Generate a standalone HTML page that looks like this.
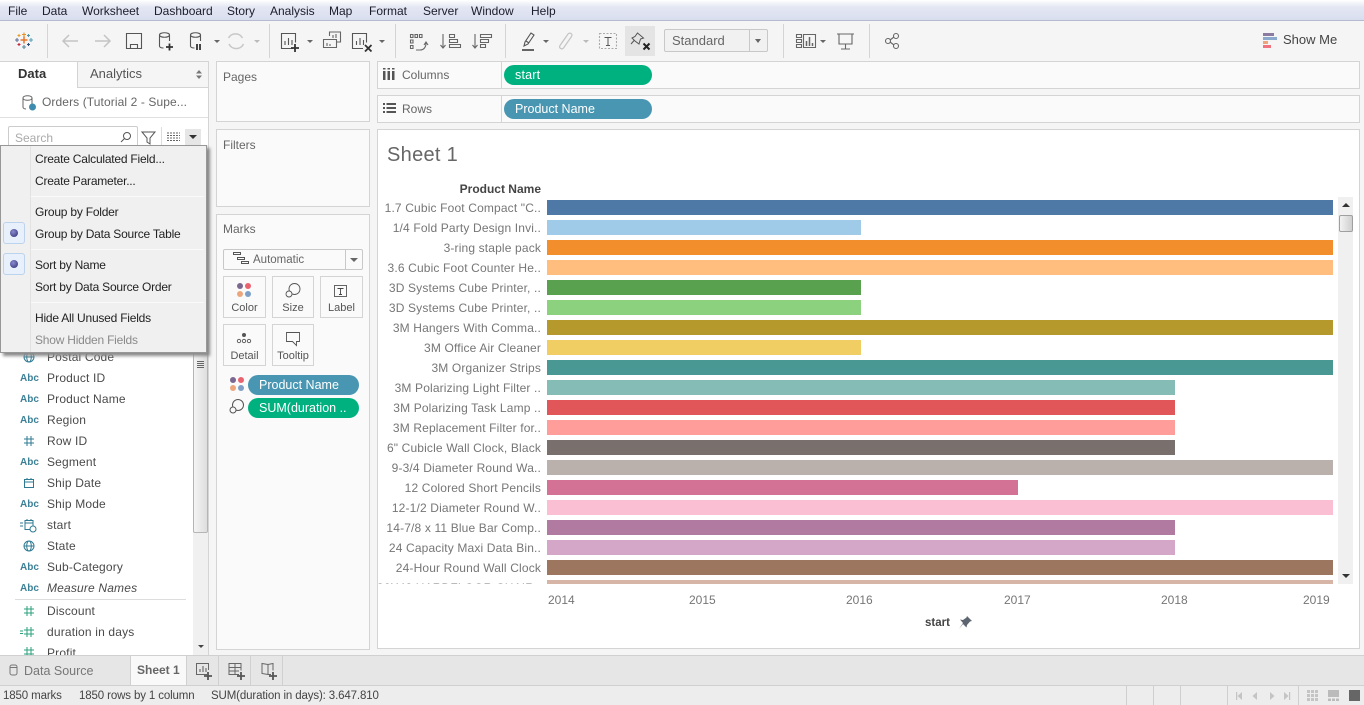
<!DOCTYPE html>
<html><head><meta charset="utf-8"><style>
html,body{margin:0;padding:0;width:1364px;height:705px;overflow:hidden;background:#f5f5f5;font-family:"Liberation Sans",sans-serif;font-size:12px;color:#333}
div,span,svg{position:absolute;box-sizing:border-box;white-space:nowrap}
svg{overflow:visible}
.m{top:3px;font-size:12px;color:#1c1c2c;line-height:16px}
.b{left:547px;height:15px}
.l{right:823px;width:165px;text-align:right;color:#767676;line-height:16px;overflow:hidden;letter-spacing:.15px}
.box{background:#fafafa;border:1px solid #d4d4d4}
.pill{border-radius:10px;color:#fff;height:20px;line-height:20px;font-size:12.5px;padding-left:11px}
.mi{left:35px;color:#222;line-height:16px;letter-spacing:-.22px}
.sp{left:31px;width:173px;height:1px;background:#d9d9d9;border-bottom:1px solid #fafafa}
.radio{left:3px;width:22px;height:22px;background:#e8f0fb;border:1px solid #bcd3ee;border-radius:3px}
.radio i{position:absolute;left:6px;top:6px;width:8px;height:8px;border-radius:50%;background:radial-gradient(circle at 40% 35%,#8a8ad0,#2b2b70)}
.f{left:47px;color:#4a4a4a;line-height:16px;letter-spacing:.17px}
.a{left:20px;width:19px;text-align:center;color:#3c8097;font-size:10px;line-height:14px;font-weight:bold}
.card{background:#fafafa;border:1px solid #d4d4d4;text-align:center;color:#555;font-size:11px}
.card span{left:0;right:0;bottom:2px;line-height:14px}
.ax{top:592px;color:#767676;line-height:16px}
.vs{top:24px;width:1px;height:34px;background:#d4d4d4}
.tri{width:0;height:0;border-left:3px solid transparent;border-right:3px solid transparent;border-top:3px solid #666}
.sb{top:686px;width:1px;height:19px;background:#cfcfcf}
.st{top:689px;color:#444;font-size:11.5px;line-height:15px;letter-spacing:-.13px}
</style></head><body>
<div style="left:0;top:0;width:1364px;height:21px;background:linear-gradient(#fff 0,#e4e7f3 35%,#d9deef 100%);border-bottom:1px solid #b5bad0"></div>
<span class="m" style="left:8px">File</span><span class="m" style="left:42px">Data</span><span class="m" style="left:82px">Worksheet</span><span class="m" style="left:154px">Dashboard</span><span class="m" style="left:227px">Story</span><span class="m" style="left:270px">Analysis</span><span class="m" style="left:329px">Map</span><span class="m" style="left:369px">Format</span><span class="m" style="left:423px">Server</span><span class="m" style="left:471px">Window</span><span class="m" style="left:531px">Help</span>

<!-- toolbar -->
<svg style="left:0;top:21px" width="1364" height="40" fill="none" stroke="#666" stroke-width="1.1">
<path d="M24 15.500v7M20.500 19h7" stroke="#e8762c" stroke-width="1.500"/>
<path d="M24 11.500v4M22 13.500h4" stroke="#e8922c"/>
<path d="M17 17v4M15 19h4" stroke="#5b6f9c"/>
<path d="M31 17v4M29 19h4" stroke="#5b9fb8"/>
<path d="M24 24v4M22 26h4" stroke="#59879b"/>
<path d="M19 13v3M17.500 14.500h3" stroke="#e8a02c"/>
<path d="M28.500 13v3M27 14.500h3" stroke="#4f96a8"/>
<path d="M19 22v3M17.500 23.500h3" stroke="#c5283d"/>
<path d="M28.500 22v3M27 23.500h3" stroke="#2f4f80"/>
<path d="M78 20H63M69 14l-6 6 6 6M95 20h15M104 14l6 6-6 6" stroke="#c4c4c4" stroke-width="1.500"/>
<path d="M126.500 12.500h15v15h-15zM130.500 27.500v-4h7v4" stroke="#555"/>
<path d="M159.500 14c0-3 10-3 10 0v6M159.500 14v11c0 1.500 2 2 4 2M159.500 14c0 3 10 3 10 0" stroke="#555"/><path d="M166 26h7M169.500 22.500v7" stroke="#333" stroke-width="1.800"/>
<path d="M190.500 14c0-3 10-3 10 0v6M190.500 14v11c0 1.500 2 2 4 2M190.500 14c0 3 10 3 10 0" stroke="#555"/><path d="M197 23v6M200 23v6" stroke="#333" stroke-width="1.800"/>
<path d="M228.500 17a8 8 0 0 1 14 0M243.500 23a8 8 0 0 1-14.500 0" stroke="#c8c8c8" stroke-width="1.500"/>
<path d="M293 27.500h-11.500v-15h14v9" stroke="#555"/><path d="M285 24v-4M288.500 24v-7M292 24v-5" stroke="#555"/><path d="M291 27h8M295 23v8" stroke="#333" stroke-width="1.800"/>
<path d="M329.500 15v-4h11v10h-3.500M323.500 18.500h13v8h-13z" stroke="#666"/><path d="M333 17v-3M336 17v-4M327 25v-3M330 25v-2" stroke="#666"/>
<path d="M363 27.500h-10.500v-15h14v9" stroke="#555"/><path d="M356.500 24v-4M360 24v-7M363.500 24v-5" stroke="#555"/><path d="M365 24l6.500 6.500M371.500 24l-6.500 6.500" stroke="#333" stroke-width="1.800"/>
<path d="M410.500 13.500h2.500v3h-2.500zM415 13.500h2.500v3H415zM419.500 13.500h2.500v3h-2.500zM410.500 19h2.500v3h-2.500zM410.500 24.500h2.500v3h-2.500zM416 29h4c4 0 6-3 6-7M424 24l2-3 2 3" stroke="#666"/>
<path d="M443 13v14M440.500 24l2.500 3 2.500-3M449.500 13.500h5v3h-5zM449.500 18.500h8v3h-8zM449.500 23.500h11v3h-11z" stroke="#666"/>
<path d="M475 13v14M472.500 24l2.500 3 2.500-3M480.500 13.500h11v3h-11zM480.500 18.500h8v3h-8zM480.500 23.500h5v3h-5z" stroke="#666"/>
<path d="M524 25l1-4 6-9 3 2-6 9zM526 20l3 2" stroke="#555"/>
<path d="M522 29h12" stroke="#555" stroke-width="1.800"/>
<path d="M561 23l7-10c2-2 5 0 3.500 2.500l-8 11.500c-1.500 2-5 0-3.500-2.500l7-10" stroke="#c4c4c4" stroke-width="1.200"/>
<rect x="599.500" y="12.500" width="17" height="15" stroke="#aaa" stroke-dasharray="2 1.500"/><path d="M604.500 16.500h7M608 16.500v8M606 24.500h4" stroke="#555" stroke-width="1"/>
</svg>
<div style="left:625px;top:26px;width:30px;height:30px;background:#e4e4e4"></div>
<svg style="left:625px;top:26px" width="30" height="30" fill="none"><path d="M12.500 7l6 5-3 1-1.500 5-4-3-3-3 3-1.500zM9.500 14l-3.500 4" stroke="#555" stroke-width="1"/><path d="M18.500 17.500l6 6M24.500 17.500l-6 6" stroke="#222" stroke-width="2"/></svg>
<div style="left:664px;top:29px;width:104px;height:23px;background:#f1f1f1;border:1px solid #c8c8c8;border-radius:2px;color:#666;font-size:13px;line-height:21px;padding-left:7px">Standard</div>
<div style="left:749px;top:30px;width:1px;height:21px;background:#c8c8c8"></div>
<div class="tri" style="left:755px;top:39px;border-left-width:3.500px;border-right-width:3.500px;border-top-width:4px"></div>
<div class="tri" style="left:214px;top:40px"></div><div class="tri" style="left:254px;top:40px;border-top-color:#bbb"></div><div class="tri" style="left:307px;top:40px"></div><div class="tri" style="left:379px;top:40px"></div><div class="tri" style="left:543px;top:40px"></div><div class="tri" style="left:583px;top:40px;border-top-color:#bbb"></div><div class="tri" style="left:820px;top:40px"></div>
<svg style="left:795px;top:30px" width="110" height="22" fill="none" stroke="#666" stroke-width="1.100">
<path d="M1.500 4.500h5v3h-5zM1.500 9.500h5v3h-5zM1.500 14.500h5v3h-5zM8.500 4.500h12v13h-12z"/><path d="M11.500 16v-5M14.500 16V7M17.500 16v-3" stroke-width="1.500"/>
<path d="M42 4h17M44 4v10h13V4M50.500 14v5M46 19h9" stroke-width="1.100"/>
<path d="M95 10l4-3M95 12l4 3" /><circle cx="93" cy="11" r="2.500"/><circle cx="101" cy="6" r="2.500"/><circle cx="101" cy="16" r="2.500"/></svg>
<div class="vs" style="left:47px"></div><div class="vs" style="left:269px"></div><div class="vs" style="left:395px"></div><div class="vs" style="left:505px"></div><div class="vs" style="left:783px"></div><div class="vs" style="left:869px"></div>
<div style="left:1263px;top:33px;width:11px;height:3px;background:#8c7ba0"></div><div style="left:1263px;top:37px;width:14px;height:3px;background:#8aa9cc"></div><div style="left:1263px;top:41px;width:5px;height:3px;background:#eda67c"></div><div style="left:1263px;top:45px;width:8px;height:3px;background:#f0737f"></div>
<span style="left:1283px;top:32px;font-size:13px;line-height:16px;color:#444">Show Me</span>

<!-- left panel -->
<div style="left:0;top:61px;width:209px;height:594px;background:#fff;border-right:1px solid #d4d4d4"></div>
<div style="left:77px;top:61px;width:131px;height:27px;background:#f5f5f5;border-left:1px solid #d4d4d4;border-bottom:1px solid #d4d4d4;border-top:1px solid #d4d4d4"></div>
<div style="left:0;top:61px;width:77px;height:1px;background:#d4d4d4"></div>
<span style="left:18px;top:66px;font-weight:bold;font-size:13px;line-height:16px;color:#333">Data</span>
<span style="left:90px;top:66px;font-size:13px;line-height:16px;color:#555">Analytics</span>
<svg style="left:196px;top:70px" width="6" height="9"><path d="M3 0l3 3.500H0zM3 9L0 5.500h6z" fill="#777"/></svg>
<svg style="left:22px;top:95px" width="16" height="16" fill="none" stroke="#666"><path d="M1 3c0-3 9-3 9 0v6M1 3v9c0 1 1 2 3 2M1 3c0 3 9 3 9 0"/><circle cx="10.500" cy="12" r="3.500" fill="#3e8bb0" stroke="none"/></svg>
<span style="left:42px;top:94px;color:#666;line-height:16px;letter-spacing:.1px">Orders (Tutorial 2 - Supe...</span>
<div style="left:0;top:117px;width:208px;height:1px;background:#e0e0e0"></div>
<div style="left:8px;top:126px;width:130px;height:25px;background:#fff;border:1px solid #ccc;border-radius:2px"></div>
<span style="left:15px;top:130px;color:#aaa;line-height:16px">Search</span>
<svg style="left:120px;top:131px" width="12" height="12" fill="none" stroke="#555"><circle cx="7" cy="5" r="3.500"/><path d="M4.500 7.500L1 11"/></svg>
<svg style="left:141px;top:131px" width="16" height="14" fill="none" stroke="#555"><path d="M1 1h13L9 7v6l-3-2V7z"/></svg>
<div style="left:161px;top:127px;width:1px;height:18px;background:#ddd"></div>
<svg style="left:167px;top:132px" width="14" height="10" stroke="#666"><path d="M0 1h13M0 3.500h13M0 6h13M0 8.500h13" stroke-dasharray="2 1"/></svg>
<div style="left:185px;top:129px;width:16px;height:16px;background:#e6e6e6"></div>
<div class="tri" style="left:189px;top:135px;border-left-width:4px;border-right-width:4px;border-top:4px solid #333"></div>

<!-- field list -->
<span class="a" style="top:393px">Abc</span><span class="f" style="top:391px">Product Name</span>
<span class="a" style="top:372px">Abc</span><span class="f" style="top:370px">Product ID</span>
<svg style="left:22px;top:351px" width="14" height="12" fill="none" stroke="#2f7a93"><circle cx="7" cy="6" r="5"/><ellipse cx="7" cy="6" rx="2.300" ry="5"/><path d="M2 6h10"/></svg><span class="f" style="top:349px">Postal Code</span>
<span class="a" style="top:414px">Abc</span><span class="f" style="top:412px">Region</span>
<svg style="left:23px;top:435px" width="12" height="12" stroke="#2f7a93" fill="none"><path d="M4 1v10M8 1v10M1 4h10M1 8h10"/></svg><span class="f" style="top:433px">Row ID</span>
<span class="a" style="top:456px">Abc</span><span class="f" style="top:454px">Segment</span>
<svg style="left:23px;top:477px" width="12" height="12" stroke="#2f7a93" fill="none"><path d="M1.500 2.500h9v8h-9zM1.500 5h9M4 1v2M8 1v2"/></svg><span class="f" style="top:475px">Ship Date</span>
<span class="a" style="top:498px">Abc</span><span class="f" style="top:496px">Ship Mode</span>
<svg style="left:20px;top:519px" width="18" height="14" stroke="#2f7a93" fill="none"><path d="M0 4h3M0 7h3M5 1.500h8v9H5zM5 4h8M7 0v2M11 0v2"/><circle cx="13" cy="10" r="3" fill="#fff"/></svg><span class="f" style="top:517px">start</span>
<svg style="left:22px;top:540px" width="14" height="12" fill="none" stroke="#2f7a93"><circle cx="7" cy="6" r="5"/><ellipse cx="7" cy="6" rx="2.300" ry="5"/><path d="M2 6h10"/></svg><span class="f" style="top:538px">State</span>
<span class="a" style="top:561px">Abc</span><span class="f" style="top:559px">Sub-Category</span>
<span class="a" style="top:582px">Abc</span><span class="f" style="top:580px;font-style:italic">Measure Names</span>
<div style="left:15px;top:599px;width:171px;height:1px;background:#ddd"></div>
<svg style="left:23px;top:605px" width="12" height="12" stroke="#2aa17c" fill="none"><path d="M4 1v10M8 1v10M1 4h10M1 8h10"/></svg><span class="f" style="top:603px">Discount</span>
<svg style="left:20px;top:626px" width="16" height="12" stroke="#2aa17c" fill="none"><path d="M0 5h3M0 7.500h3M7 1v10M11 1v10M4 4h10M4 8h10"/></svg><span class="f" style="top:624px">duration in days</span>
<svg style="left:23px;top:647px" width="12" height="8" stroke="#2aa17c" fill="none"><path d="M4 0v8M8 0v8M1 3h10M1 7h10"/></svg>
<span class="f" style="top:645px;height:10px;line-height:16px;overflow:hidden">Profit</span>
<div style="left:193px;top:145px;width:15px;height:510px;background:#f0f0f0"></div>
<div style="left:193px;top:340px;width:15px;height:193px;background:linear-gradient(90deg,#f4f4f4,#dedede);border:1px solid #b5b5b5;border-radius:2px"></div>
<svg style="left:197px;top:361px" width="8" height="8" stroke="#666"><path d="M0 .5h7M0 2.500h7M0 4.500h7M0 6.500h7"/></svg>
<div class="tri" style="left:198px;top:645px;border-top-color:#444"></div>

<!-- context menu -->
<div style="left:0;top:145px;width:207px;height:208px;background:#f0f0f0;border:1px solid #979797;box-shadow:3px 3px 3px #8a8a8a"></div>
<div style="left:30px;top:146px;width:1px;height:206px;background:#e2e2e2"></div>
<span class="mi" style="top:151px">Create Calculated Field...</span>
<span class="mi" style="top:173px">Create Parameter...</span>
<div class="sp" style="top:196px"></div>
<span class="mi" style="top:204px">Group by Folder</span>
<div class="radio" style="top:222px"><i></i></div>
<span class="mi" style="top:226px">Group by Data Source Table</span>
<div class="sp" style="top:249px"></div>
<div class="radio" style="top:253px"><i></i></div>
<span class="mi" style="top:257px">Sort by Name</span>
<span class="mi" style="top:279px">Sort by Data Source Order</span>
<div class="sp" style="top:302px"></div>
<span class="mi" style="top:310px">Hide All Unused Fields</span>
<span class="mi" style="top:332px;color:#8a8a8a">Show Hidden Fields</span>

<!-- cards -->
<div class="box" style="left:216px;top:61px;width:154px;height:61px"></div><span style="left:223px;top:69px;color:#666;line-height:16px">Pages</span>
<div class="box" style="left:216px;top:129px;width:154px;height:78px"></div><span style="left:223px;top:137px;color:#666;line-height:16px">Filters</span>
<div class="box" style="left:216px;top:214px;width:154px;height:436px"></div><span style="left:223px;top:221px;color:#666;line-height:16px">Marks</span>
<div style="left:223px;top:249px;width:140px;height:21px;background:#fafafa;border:1px solid #c8c8c8;border-radius:2px"></div>
<div style="left:345px;top:250px;width:1px;height:19px;background:#c8c8c8"></div>
<svg style="left:233px;top:251px" width="18" height="15" fill="none" stroke="#555"><path d="M.5 1.500h7v2h-7zM4.500 6.500h7v2h-7zM8.500 10.500h7v2h-7z"/></svg>
<span style="left:253px;top:252px;color:#666;font-size:11.500px;line-height:16px">Automatic</span>
<div class="tri" style="left:350px;top:258px;border-left-width:4px;border-right-width:4px;border-top:4px solid #666"></div>
<div class="card" style="left:223px;top:276px;width:43px;height:42px"><span>Color</span></div>
<div class="card" style="left:272px;top:276px;width:42px;height:42px"><span>Size</span></div>
<div class="card" style="left:320px;top:276px;width:43px;height:42px"><span>Label</span></div>
<div class="card" style="left:223px;top:324px;width:43px;height:42px"><span>Detail</span></div>
<div class="card" style="left:272px;top:324px;width:42px;height:42px"><span>Tooltip</span></div>
<svg style="left:230px;top:280px" width="130" height="85" fill="none" stroke-width=".9">
<circle cx="10" cy="6" r="3" fill="#7b6890"/><circle cx="18" cy="6" r="3" fill="#e8636f"/><circle cx="10" cy="14" r="3" fill="#eda67c"/><circle cx="18" cy="14" r="3" fill="#7f9fc6"/>
<circle cx="64.500" cy="9" r="5.500" stroke="#555"/><circle cx="59" cy="14" r="3" stroke="#555" fill="#fafafa"/>
<rect x="104.500" y="5.500" width="12" height="11" stroke="#555"/><path d="M107.500 8.500h6M110.500 8.500v6M109 14.500h3" stroke="#444"/>
<circle cx="14" cy="55" r="2" fill="#555"/><circle cx="9" cy="61" r="1.700" stroke="#555"/><circle cx="14" cy="61" r="1.700" stroke="#555"/><circle cx="19" cy="61" r="1.700" stroke="#555"/>
<path d="M56.500 52.500h13v9h-3v4l-4-4h-6z" stroke="#555"/></svg>
<svg style="left:229px;top:376px" width="18" height="42" fill="none">
<circle cx="4" cy="4" r="3" fill="#7b6890"/><circle cx="12" cy="4" r="3" fill="#e8636f"/><circle cx="4" cy="12" r="3" fill="#eda67c"/><circle cx="12" cy="12" r="3" fill="#7f9fc6"/>
<circle cx="9" cy="29" r="5.500" stroke="#555"/><circle cx="4" cy="34" r="3" stroke="#555" fill="#fafafa"/></svg>
<div class="pill" style="left:248px;top:375px;width:111px;background:#4996b2">Product Name</div>
<div class="pill" style="left:248px;top:398px;width:111px;background:#00b180">SUM(duration ..</div>

<!-- shelves -->
<div class="box" style="left:377px;top:61px;width:983px;height:28px"></div>
<div style="left:501px;top:62px;width:1px;height:27px;background:#d4d4d4"></div>
<svg style="left:383px;top:68px" width="12" height="12"><path d="M0 3h2.500v9H0zM4.500 3H7v9H4.500zM9 3h2.500v9H9zM0 0h2.500v1.500H0zM4.500 0H7v1.500H4.500zM9 0h2.500v1.500H9z" fill="#555"/></svg>
<span style="left:402px;top:67px;color:#666;line-height:16px">Columns</span>
<div class="pill" style="left:504px;top:65px;width:148px;background:#00b180;letter-spacing:.2px">start</div>
<div class="box" style="left:377px;top:95px;width:983px;height:28px"></div>
<div style="left:501px;top:96px;width:1px;height:27px;background:#d4d4d4"></div>
<svg style="left:383px;top:102px" width="13" height="12"><path d="M0 1h2v2H0zM3.500 1H13v2H3.500zM0 5h2v2H0zM3.500 5H13v2H3.500zM0 9h2v2H0zM3.500 9H13v2H3.500z" fill="#555"/></svg>
<span style="left:402px;top:101px;color:#666;line-height:16px">Rows</span>
<div class="pill" style="left:504px;top:99px;width:148px;background:#4996b2">Product Name</div>

<!-- view -->
<div style="left:377px;top:129px;width:983px;height:520px;background:#fff;border:1px solid #d4d4d4"></div>
<span style="left:387px;top:143px;font-size:20px;line-height:24px;color:#666;letter-spacing:.3px">Sheet 1</span>
<span style="left:381px;width:160px;top:181px;text-align:right;font-weight:bold;color:#444;line-height:16px">Product Name</span>
<div class="b" style="top:200px;width:786px;background:#4e79a7"></div>
<div class="b" style="top:220px;width:314px;background:#a0cbe8"></div>
<div class="b" style="top:240px;width:786px;background:#f28e2b"></div>
<div class="b" style="top:260px;width:786px;background:#ffbe7d"></div>
<div class="b" style="top:280px;width:314px;background:#59a14f"></div>
<div class="b" style="top:300px;width:314px;background:#8cd17d"></div>
<div class="b" style="top:320px;width:786px;background:#b6992d"></div>
<div class="b" style="top:340px;width:314px;background:#f1ce63"></div>
<div class="b" style="top:360px;width:786px;background:#499894"></div>
<div class="b" style="top:380px;width:628px;background:#86bcb6"></div>
<div class="b" style="top:400px;width:628px;background:#e15759"></div>
<div class="b" style="top:420px;width:628px;background:#ff9d9a"></div>
<div class="b" style="top:440px;width:628px;background:#79706e"></div>
<div class="b" style="top:460px;width:786px;background:#bab0ac"></div>
<div class="b" style="top:480px;width:471px;background:#d37295"></div>
<div class="b" style="top:500px;width:786px;background:#fabfd2"></div>
<div class="b" style="top:520px;width:628px;background:#b07aa1"></div>
<div class="b" style="top:540px;width:628px;background:#d4a6c8"></div>
<div class="b" style="top:560px;width:786px;background:#9d7660"></div>
<div class="b" style="top:580px;width:786px;height:4px;background:#d7b5a6"></div>
<span class="l" style="top:200px">1.7 Cubic Foot Compact "C..</span>
<span class="l" style="top:220px">1/4 Fold Party Design Invi..</span>
<span class="l" style="top:240px">3-ring staple pack</span>
<span class="l" style="top:260px">3.6 Cubic Foot Counter He..</span>
<span class="l" style="top:280px">3D Systems Cube Printer, ..</span>
<span class="l" style="top:300px">3D Systems Cube Printer, ..</span>
<span class="l" style="top:320px">3M Hangers With Comma..</span>
<span class="l" style="top:340px">3M Office Air Cleaner</span>
<span class="l" style="top:360px">3M Organizer Strips</span>
<span class="l" style="top:380px">3M Polarizing Light Filter ..</span>
<span class="l" style="top:400px">3M Polarizing Task Lamp ..</span>
<span class="l" style="top:420px">3M Replacement Filter for..</span>
<span class="l" style="top:440px">6" Cubicle Wall Clock, Black</span>
<span class="l" style="top:460px">9-3/4 Diameter Round Wa..</span>
<span class="l" style="top:480px">12 Colored Short Pencils</span>
<span class="l" style="top:500px">12-1/2 Diameter Round W..</span>
<span class="l" style="top:520px">14-7/8 x 11 Blue Bar Comp..</span>
<span class="l" style="top:540px">24 Capacity Maxi Data Bin..</span>
<span class="l" style="top:560px">24-Hour Round Wall Clock</span>
<span class="l" style="top:580px;height:4px;line-height:16px">36X48 HARDFLOOR CHAIR..</span>
<span class="ax" style="left:548px">2014</span><span class="ax" style="left:689px">2015</span><span class="ax" style="left:846px">2016</span><span class="ax" style="left:1004px">2017</span><span class="ax" style="left:1161px">2018</span><span class="ax" style="left:1303px">2019</span>
<span style="left:925px;top:615px;color:#444;font-weight:bold;font-size:11.500px;line-height:16px">start</span>
<svg style="left:959px;top:616px" width="14" height="14"><path d="M8 0l5 5-2 .5-3 3.500-.5 2.500L4 8 0 13l4-6-3-3.500 3 .5 3.500-2.500z" fill="#5c6570"/></svg>
<div style="left:1338px;top:197px;width:15px;height:387px;background:#f0f0f0"></div>
<div class="tri" style="left:1342px;top:203px;border-top:0;border-left-width:4px;border-right-width:4px;border-bottom:4px solid #333"></div>
<div style="left:1339px;top:215px;width:14px;height:17px;background:linear-gradient(90deg,#f2f2f2,#cfcfcf);border:1px solid #9f9f9f;border-radius:2px"></div>
<div class="tri" style="left:1342px;top:574px;border-left-width:4px;border-right-width:4px;border-top:4px solid #333"></div>

<!-- tabs -->
<div style="left:0;top:655px;width:1364px;height:31px;background:#e6e6e6;border-top:1px solid #d0d0d0;border-bottom:1px solid #d0d0d0"></div>
<svg style="left:9px;top:664px" width="10" height="14" fill="none" stroke="#777"><rect x="1" y="1" width="7" height="10" rx="2"/><path d="M1 3.500h7"/></svg>
<span style="left:24px;top:663px;font-size:12.500px;line-height:16px;color:#777">Data Source</span>
<div style="left:130px;top:656px;width:57px;height:29px;background:#f9f9f9;border-left:1px solid #d0d0d0;border-right:1px solid #d0d0d0"></div>
<span style="left:137px;top:662px;font-weight:bold;font-size:12px;line-height:16px;color:#666">Sheet 1</span>
<div style="left:218px;top:656px;width:1px;height:29px;background:#d0d0d0"></div><div style="left:250px;top:656px;width:1px;height:29px;background:#d0d0d0"></div><div style="left:282px;top:656px;width:1px;height:29px;background:#d0d0d0"></div>
<svg style="left:195px;top:662px" width="90" height="20" fill="none" stroke="#666">
<path d="M12 12.500H1.500v-11h12V8"/><path d="M5 10V7M8 10V4M11 10V6" stroke-width="1.100"/><path d="M9 14h8M13 10v8" stroke="#555" stroke-width="1.800"/>
<path d="M44 12.500h-10v-11h12v7M34 5.500h12M40 1.500v11M34 9h10"/><path d="M42 14h8M46 10v8" stroke="#555" stroke-width="1.800"/>
<path d="M76 12.500h-3l-6-1v-10l6 1 5-1v7M73 2.500v10"/><path d="M74 14h8M78 10v8" stroke="#555" stroke-width="1.800"/></svg>

<!-- status -->
<div style="left:0;top:686px;width:1364px;height:19px;background:#ededed"></div>
<span class="st" style="left:3px">1850 marks</span><span class="st" style="left:79px">1850 rows by 1 column</span><span class="st" style="left:211px">SUM(duration in days): 3.647.810</span>
<div class="sb" style="left:1126px"></div><div class="sb" style="left:1153px"></div><div class="sb" style="left:1180px"></div><div class="sb" style="left:1227px"></div><div class="sb" style="left:1298px"></div>
<svg style="left:1234px;top:689px" width="130" height="14"><g fill="#c4c4c4"><path d="M2 3h1.200v8H2zM8 3v8L3.500 7zM23 3v8l-4.500-4zM36 3v8l4.500-4zM50 3v8l4.500-4zM55 3h1.200v8H55z"/>
<path d="M73 1h3v3h-3zM77 1h3v3h-3zM81 1h3v3h-3zM73 5h3v3h-3zM77 5h3v3h-3zM81 5h3v3h-3zM73 9h3v3h-3zM77 9h3v3h-3zM81 9h3v3h-3z"/>
<path d="M94 1h11v7H94zM94 9.500h3V12h-3zM98 9.500h3V12h-3zM102 9.500h3V12h-3z" fill="#bbb"/></g><rect x="115" y="1" width="11" height="11" fill="#666"/></svg>
</body></html>
